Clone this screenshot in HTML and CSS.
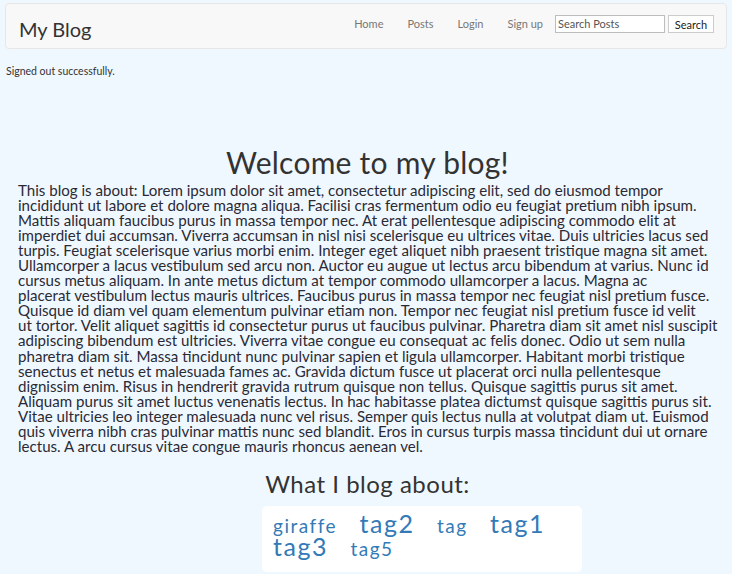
FILE: index.html
```html
<!DOCTYPE html>
<html lang="en">
<head>
<meta charset="utf-8">
<title>My Blog</title>
<link rel="stylesheet" href="styles.css">
</head>
<body>
<nav class="navbar">
  <a class="brand" href="#">My Blog</a>
  <div class="nav-right">
    <ul class="nav-links">
      <li><a href="#">Home</a></li>
      <li><a href="#">Posts</a></li>
      <li><a href="#">Login</a></li>
      <li><a href="#">Sign up</a></li>
    </ul>
    <form class="search">
      <input class="search-input" type="text" placeholder="Search Posts">
      <button class="search-btn" type="button">Search</button>
    </form>
  </div>
</nav>
<p class="notice">Signed out successfully.</p>
<main class="container">
  <h1 class="title">Welcome to my blog!</h1>
  <p class="intro">This blog is about: Lorem ipsum dolor sit amet, consectetur adipiscing elit, sed do eiusmod tempor<br>
incididunt ut labore et dolore magna aliqua. Facilisi cras fermentum odio eu feugiat pretium nibh ipsum.<br>
Mattis aliquam faucibus purus in massa tempor nec. At erat pellentesque adipiscing commodo elit at<br>
imperdiet dui accumsan. Viverra accumsan in nisl nisi scelerisque eu ultrices vitae. Duis ultricies lacus sed<br>
turpis. Feugiat scelerisque varius morbi enim. Integer eget aliquet nibh praesent tristique magna sit amet.<br>
Ullamcorper a lacus vestibulum sed arcu non. Auctor eu augue ut lectus arcu bibendum at varius. Nunc id<br>
cursus metus aliquam. In ante metus dictum at tempor commodo ullamcorper a lacus. Magna ac<br>
placerat vestibulum lectus mauris ultrices. Faucibus purus in massa tempor nec feugiat nisl pretium fusce.<br>
Quisque id diam vel quam elementum pulvinar etiam non. Tempor nec feugiat nisl pretium fusce id velit<br>
ut tortor. Velit aliquet sagittis id consectetur purus ut faucibus pulvinar. Pharetra diam sit amet nisl suscipit<br>
adipiscing bibendum est ultricies. Viverra vitae congue eu consequat ac felis donec. Odio ut sem nulla<br>
pharetra diam sit. Massa tincidunt nunc pulvinar sapien et ligula ullamcorper. Habitant morbi tristique<br>
senectus et netus et malesuada fames ac. Gravida dictum fusce ut placerat orci nulla pellentesque<br>
dignissim enim. Risus in hendrerit gravida rutrum quisque non tellus. Quisque sagittis purus sit amet.<br>
Aliquam purus sit amet luctus venenatis lectus. In hac habitasse platea dictumst quisque sagittis purus sit.<br>
Vitae ultricies leo integer malesuada nunc vel risus. Semper quis lectus nulla at volutpat diam ut. Euismod<br>
quis viverra nibh cras pulvinar mattis nunc sed blandit. Eros in cursus turpis massa tincidunt dui ut ornare<br>
lectus. A arcu cursus vitae congue mauris rhoncus aenean vel.</p>
  <h2 class="subtitle">What I blog about:</h2>
  <div class="tags"><a class="tag tag-sm" href="#">giraffe</a><a class="tag tag-lg" href="#">tag2</a><a class="tag tag-sm" href="#">tag</a><a class="tag tag-lg" href="#">tag1</a><a class="tag tag-lg" href="#">tag3</a><a class="tag tag-sm" href="#">tag5</a></div>
</main>
</body>
</html>
```
FILE: styles.css
```css
* { box-sizing: border-box; }

html, body {
  margin: 0;
  padding: 0;
}

body {
  background: #f0f8ff;
  font-family: Lato, "Noto Sans", "DejaVu Sans", sans-serif;
  color: #222;
  width: 732px;
  height: 574px;
  overflow: hidden;
}

a { text-decoration: none; }

.navbar {
  display: flex;
  align-items: center;
  justify-content: space-between;
  margin: 3px 5px 0;
  height: 46px;
  padding: 0 12px 0 13px;
  background: #f8f8f8;
  border: 1px solid #e7e7e7;
  border-radius: 4px;
}

.brand {
  font-size: 20px;
  line-height: 1;
  color: #333;
  padding-top: 6px;
}

.nav-right {
  display: flex;
  align-items: center;
  padding-bottom: 5px;
}

.nav-links {
  display: flex;
  list-style: none;
  margin: 0;
  padding: 0;
}

.nav-links a {
  display: block;
  padding: 0 12px;
  font-size: 11px;
  line-height: 15px;
  color: #777;
}

.search {
  display: flex;
  align-items: center;
  gap: 3px;
}

.search-input {
  width: 110px;
  height: 18px;
  margin: 0;
  padding: 0 2px;
  border: 1px solid #bdbdbd;
  background: #fff;
  font-family: inherit;
  font-size: 11px;
  color: #333;
}

.search-input::placeholder { color: #555; }

.search-btn {
  width: 46px;
  height: 18px;
  margin: 1px 0 0;
  padding: 0;
  border: 1px solid #ccc;
  background: #fff;
  font-family: inherit;
  font-size: 11px;
  color: #222;
}

.notice {
  margin: 15px 0 0 6px;
  font-size: 10.5px;
  line-height: 15px;
  color: #333;
}

.container {
  padding: 0 15px 0 18px;
}

.title {
  margin: 66px 0 0;
  text-align: center;
  font-size: 30px;
  line-height: 34px;
  letter-spacing: 0.25px;
  font-weight: 400;
  color: #333;
}

.intro {
  margin: 4px 0 0;
  font-size: 15.1px;
  line-height: 15.05px;
  white-space: nowrap;
  color: #2a2a35;
}

.subtitle {
  margin: 17px 0 0;
  text-align: center;
  font-size: 24px;
  line-height: 26px;
  letter-spacing: 0.5px;
  font-weight: 400;
  color: #333;
}

.tags {
  display: flex;
  flex-wrap: wrap;
  align-items: baseline;
  column-gap: 22.5px;
  width: 320px;
  margin: 9px 0 0 244px;
  padding: 7px 11px 13px;
  background: #fff;
  border-radius: 5px;
}

.tag {
  color: #337ab7;
  line-height: 21px;
  letter-spacing: 1.5px;
}

.tag-sm { font-size: 19px; }
.tag-lg { font-size: 25px; }
```
